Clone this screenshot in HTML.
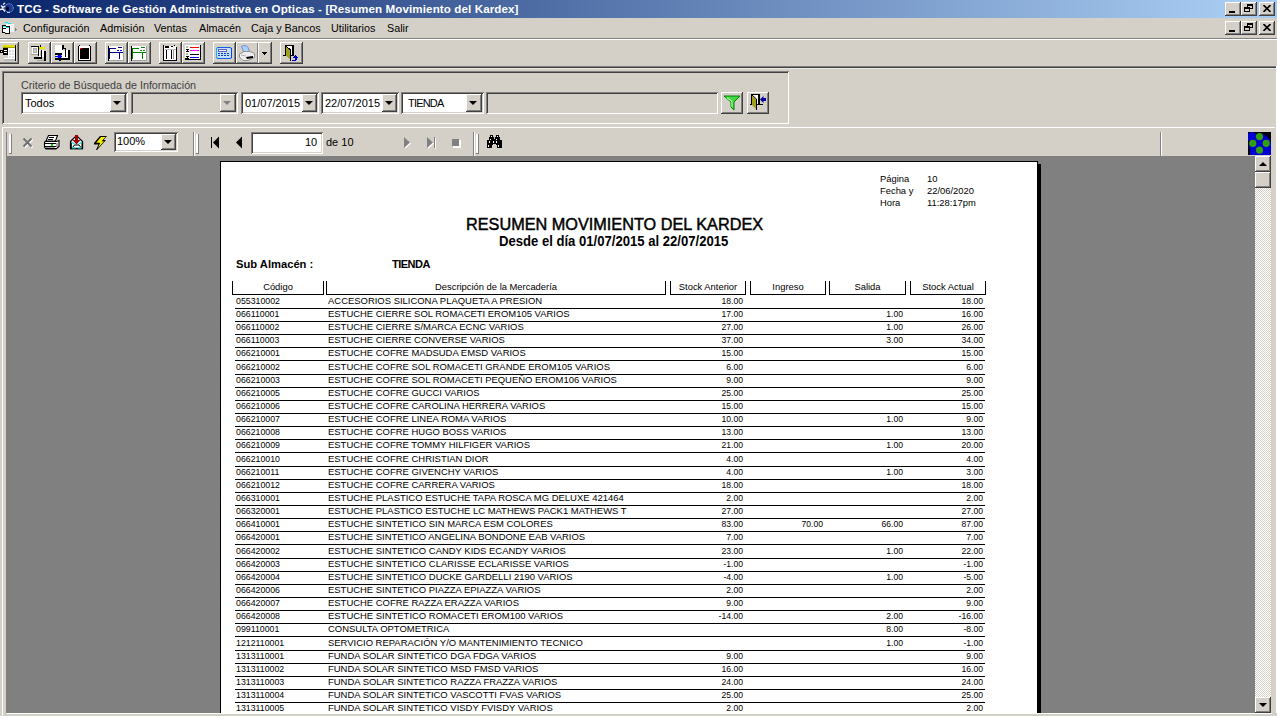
<!DOCTYPE html>
<html><head><meta charset="utf-8">
<style>
*{margin:0;padding:0;box-sizing:border-box}
html,body{width:1277px;height:716px;overflow:hidden;background:#d4d0c8;font-family:"Liberation Sans",sans-serif;color:#000}
.a{position:absolute}
.t{position:absolute;white-space:pre;line-height:1}
.raised{position:absolute;background:#d4d0c8;box-shadow:inset -1px -1px #404040,inset 1px 1px #fff,inset -2px -2px #808080}
.sunk{position:absolute;background:#fff;box-shadow:inset 1px 1px #808080,inset -1px -1px #fff,inset 2px 2px #404040,inset -2px -2px #d4d0c8}
.hl{position:absolute;height:1px}
.vl{position:absolute;width:1px}
.tri{position:absolute;width:0;height:0;border-left:4px solid transparent;border-right:4px solid transparent;border-top:4px solid #000}
/* report */
.rl{position:absolute;left:235px;width:750px;height:1px;background:#000}
.rt{position:absolute;white-space:pre;line-height:1;font-size:10px}
.rt.c{left:236px;transform:scale(0.879,0.9);transform-origin:0 0}
.rt.d{left:328px;transform:scale(0.945,0.9);transform-origin:0 0}
.rt.n{width:80px;text-align:right;transform:scale(0.86,0.9);transform-origin:100% 0}
.hb{position:absolute;top:281px;height:14px;border:1px solid #000;border-top:none}
.ht{position:absolute;top:282px;font-size:9.4px;white-space:pre;line-height:1;text-align:center}
</style></head><body>

<!-- TITLE BAR -->
<div class="a" style="left:0;top:0;width:1277px;height:18px;background:linear-gradient(to right,#0a246a 0px,#a6caf0 1224px)"></div>
<svg class="a" style="left:0;top:0" width="16" height="18" viewBox="0 0 16 18">
 <circle cx="9" cy="8" r="4.3" fill="#1a3a9a" stroke="#7aa0e0" stroke-width="1" stroke-dasharray="1.2 0.6"/>
 <ellipse cx="7.5" cy="8.5" rx="1.6" ry="2.2" fill="#000"/>
 <path d="M0 9.5 L3 9 L5 11.5 M1 5.5 L3 7.5 M3 4.5 L5 3 M2 8 L5 6" stroke="#f0f4ff" stroke-width="1.3" fill="none"/>
 <path d="M7 12.5 H10" stroke="#c0d0f0" stroke-width="1"/>
</svg>
<div class="t" style="left:17px;top:3px;font-size:11.6px;font-weight:bold;color:#fff;letter-spacing:0.1px">TCG - Software de Gestión Administrativa en Opticas - [Resumen Movimiento del Kardex]</div>
<div class="raised" style="left:1225px;top:2px;width:16px;height:14px"><div class="a" style="left:4px;top:9px;width:6px;height:2px;background:#000"></div></div>
<div class="raised" style="left:1241px;top:2px;width:16px;height:14px">
 <div class="a" style="left:6px;top:2px;width:6px;height:5px;border:1px solid #000;border-top-width:2px"></div>
 <div class="a" style="left:3px;top:5px;width:6px;height:5px;border:1px solid #000;border-top-width:2px;background:#d4d0c8"></div>
</div>
<div class="raised" style="left:1259px;top:2px;width:16px;height:14px">
 <svg class="a" style="left:4px;top:3px" width="8" height="7" viewBox="0 0 8 7"><path d="M0.5 0 L7.5 7 M7.5 0 L0.5 7" stroke="#000" stroke-width="1.6"/></svg>
</div>

<!-- MENU BAR -->
<svg class="a" style="left:0;top:18px" width="18" height="20" viewBox="0 18 18 20" shape-rendering="crispEdges">
 <rect x="5" y="22" width="3" height="1" fill="#00e8f0"/><rect x="8" y="23" width="3" height="1" fill="#00e8f0"/><rect x="12" y="24" width="2" height="1" fill="#00e8f0"/>
 <rect x="6" y="24" width="8" height="8" fill="#fff"/><rect x="11" y="25" width="3" height="7" fill="#f0f0f0"/>
 <rect x="2" y="25" width="4" height="1" fill="#000"/><rect x="6" y="26" width="4" height="1" fill="#000"/><rect x="2" y="25" width="1" height="8" fill="#000"/><rect x="9" y="26" width="1" height="7" fill="#000"/><rect x="2" y="32" width="3" height="1" fill="#000"/><rect x="5" y="33" width="5" height="1" fill="#000"/>
 <rect x="3" y="26" width="3" height="1" fill="#00e8f0"/><rect x="6" y="27" width="3" height="1" fill="#00e8f0"/>
 <rect x="3" y="27" width="3" height="5" fill="#fff"/><rect x="6" y="28" width="3" height="5" fill="#fff"/><rect x="3" y="28" width="3" height="1" fill="#000"/>
 <rect x="15" y="28" width="1" height="3" fill="#808080"/><rect x="16" y="29" width="1" height="1" fill="#808080"/>
</svg>
<div class="t" style="left:23px;top:23px;font-size:10.8px">Configuración</div>
<div class="t" style="left:100px;top:23px;font-size:10.8px">Admisión</div>
<div class="t" style="left:154px;top:23px;font-size:10.8px">Ventas</div>
<div class="t" style="left:199px;top:23px;font-size:10.8px">Almacén</div>
<div class="t" style="left:251px;top:23px;font-size:10.8px">Caja y Bancos</div>
<div class="t" style="left:331px;top:23px;font-size:10.8px">Utilitarios</div>
<div class="t" style="left:387px;top:23px;font-size:10.8px">Salir</div>
<div class="raised" style="left:1225px;top:21px;width:16px;height:14px"><div class="a" style="left:4px;top:9px;width:6px;height:2px;background:#000"></div></div>
<div class="raised" style="left:1241px;top:21px;width:16px;height:14px">
 <div class="a" style="left:6px;top:2px;width:6px;height:5px;border:1px solid #000;border-top-width:2px"></div>
 <div class="a" style="left:3px;top:5px;width:6px;height:5px;border:1px solid #000;border-top-width:2px;background:#d4d0c8"></div>
</div>
<div class="raised" style="left:1259px;top:21px;width:16px;height:14px">
 <svg class="a" style="left:4px;top:3px" width="8" height="7" viewBox="0 0 8 7"><path d="M0.5 0 L7.5 7 M7.5 0 L0.5 7" stroke="#000" stroke-width="1.6"/></svg>
</div>
<div class="hl" style="left:0;top:38px;width:1277px;background:#808080"></div>
<div class="hl" style="left:0;top:39px;width:1277px;background:#fff"></div>

<!-- MAIN TOOLBAR -->
<div class="raised" style="left:-4px;top:42px;width:23px;height:22px"></div>
<div class="raised" style="left:28px;top:42px;width:23px;height:22px"></div>
<div class="raised" style="left:51px;top:42px;width:23px;height:22px"></div>
<div class="raised" style="left:74px;top:42px;width:23px;height:22px"></div>
<div class="raised" style="left:105px;top:42px;width:23px;height:22px"></div>
<div class="raised" style="left:128px;top:42px;width:23px;height:22px"></div>
<div class="raised" style="left:159px;top:42px;width:23px;height:22px"></div>
<div class="raised" style="left:182px;top:42px;width:23px;height:22px"></div>
<div class="raised" style="left:213px;top:42px;width:23px;height:22px"></div>
<div class="raised" style="left:236px;top:42px;width:23px;height:22px"></div>
<div class="raised" style="left:280px;top:42px;width:23px;height:22px"></div>
<div class="raised" style="left:258px;top:42px;width:14px;height:22px"></div>
<svg class="a" style="left:0px;top:44px" width="17" height="18" viewBox="0 44 17 18" shape-rendering="crispEdges"><rect x="3" y="45" width="12" height="2" fill="#e0e000"/><rect x="3" y="47" width="12" height="1" fill="#a0a000"/><rect x="15" y="45" width="1" height="16" fill="#000"/><rect x="8" y="48" width="7" height="12" fill="#fff"/><rect x="9" y="50" width="5" height="8" fill="#e0e0e0"/><rect x="10" y="51" width="1" height="1" fill="#c0c0c0"/><rect x="9" y="52" width="5" height="1" fill="#fff"/><rect x="9" y="55" width="5" height="1" fill="#fff"/><rect x="11" y="50" width="1" height="8" fill="#fff"/><rect x="4" y="59" width="11" height="2" fill="#b8b8b8"/><rect x="4" y="58" width="4" height="1" fill="#fff"/><rect x="3" y="48" width="5" height="7" fill="#000"/><rect x="4" y="50" width="3" height="1" fill="#fff"/><rect x="4" y="52" width="3" height="1" fill="#fff"/><rect x="0" y="50" width="3" height="3" fill="#000"/><rect x="1" y="51" width="1" height="1" fill="#fff"/></svg>
<svg class="a" style="left:30px;top:44px" width="17" height="18" viewBox="30 44 17 18" shape-rendering="crispEdges"><rect x="31" y="46" width="8" height="1" fill="#000"/><rect x="32" y="47" width="6" height="7" fill="#fff"/><rect x="33" y="48" width="4" height="5" fill="#a8a8a8"/><rect x="34" y="49" width="2" height="3" fill="#d0d0d0"/><rect x="31" y="54" width="7" height="1" fill="#a0a0a0"/><rect x="38" y="46" width="1" height="10" fill="#000"/><rect x="40" y="45" width="1" height="3" fill="#000"/><rect x="39" y="47" width="6" height="2" fill="#e8e800"/><rect x="39" y="48" width="1" height="1" fill="#c0c000"/><rect x="39" y="50" width="5" height="7" fill="#fff"/><rect x="40" y="51" width="2" height="5" fill="#c0c0c0"/><rect x="41" y="50" width="1" height="8" fill="#000"/><rect x="44" y="51" width="2" height="10" fill="#000"/><rect x="34" y="57" width="8" height="2" fill="#000"/><rect x="37" y="60" width="7" height="1" fill="#a0a0a0"/></svg>
<svg class="a" style="left:54px;top:44px" width="17" height="18" viewBox="54 44 17 18" shape-rendering="crispEdges"><rect x="55" y="45" width="7" height="9" fill="#fff"/><rect x="62" y="45" width="2" height="5" fill="#000"/><rect x="64" y="48" width="2" height="2" fill="#000"/><rect x="63" y="49" width="2" height="8" fill="#c8c8c8"/><rect x="64" y="50" width="1" height="1" fill="#fff"/><rect x="64" y="52" width="1" height="1" fill="#fff"/><rect x="55" y="53" width="7" height="2" fill="#000"/><rect x="62" y="50" width="6" height="8" fill="#fff"/><rect x="68" y="50" width="2" height="10" fill="#000"/><rect x="55" y="58" width="15" height="2" fill="#000"/><rect x="65" y="49" width="1" height="8" fill="#000"/><rect x="55" y="56" width="6" height="1" fill="#0000ff"/><rect x="58" y="55" width="3" height="3" fill="#0000ff"/><rect x="61" y="56" width="1" height="1" fill="#0000ff"/><rect x="59" y="60" width="2" height="1" fill="#000"/><rect x="56" y="55" width="1" height="1" fill="#fff"/></svg>
<svg class="a" style="left:77px;top:44px" width="15" height="18" viewBox="77 44 15 18" shape-rendering="crispEdges"><rect x="78" y="46" width="1" height="15" fill="#000"/><rect x="90" y="46" width="1" height="15" fill="#000"/><rect x="78" y="60" width="13" height="1" fill="#000"/><rect x="79" y="45" width="1" height="1" fill="#000"/><rect x="89" y="45" width="1" height="1" fill="#000"/><rect x="79" y="46" width="11" height="14" fill="#fff"/><rect x="80" y="48" width="9" height="11" fill="#000"/><rect x="80" y="48" width="2" height="1" fill="#ff0000"/></svg>
<svg class="a" style="left:107px;top:45px" width="18" height="17" viewBox="107 45 18 17" shape-rendering="crispEdges"><rect x="109" y="46" width="14" height="14" fill="#fff"/><rect x="123" y="46" width="1" height="15" fill="#a0a0a0"/><rect x="109" y="60" width="15" height="1" fill="#a0a0a0"/><rect x="108" y="46" width="1" height="15" fill="#000"/><rect x="109" y="48" width="1" height="11" fill="#00008c"/><rect x="109" y="48" width="7" height="1" fill="#00008c"/><rect x="118" y="47" width="4" height="1" fill="#00008c"/><rect x="117" y="50" width="2" height="1" fill="#0000ff"/><rect x="120" y="50" width="2" height="1" fill="#0000ff"/><rect x="109" y="52" width="14" height="1" fill="#00008c"/><rect x="119" y="52" width="1" height="7" fill="#00008c"/></svg>
<svg class="a" style="left:130px;top:45px" width="18" height="17" viewBox="130 45 18 17" shape-rendering="crispEdges"><rect x="132" y="46" width="14" height="14" fill="#fff"/><rect x="146" y="46" width="1" height="15" fill="#a0a0a0"/><rect x="132" y="60" width="15" height="1" fill="#a0a0a0"/><rect x="131" y="46" width="1" height="15" fill="#000"/><rect x="132" y="48" width="1" height="11" fill="#008000"/><rect x="132" y="48" width="7" height="1" fill="#008000"/><rect x="141" y="47" width="4" height="1" fill="#008000"/><rect x="140" y="50" width="2" height="1" fill="#00a000"/><rect x="143" y="50" width="2" height="1" fill="#00a000"/><rect x="132" y="52" width="14" height="1" fill="#008000"/><rect x="142" y="52" width="1" height="7" fill="#008000"/></svg>
<svg class="a" style="left:162px;top:44px" width="16" height="18" viewBox="162 44 16 18" shape-rendering="crispEdges"><rect x="163" y="45" width="1" height="16" fill="#000"/><rect x="176" y="47" width="1" height="14" fill="#000"/><rect x="163" y="60" width="14" height="1" fill="#000"/><rect x="174" y="45" width="1" height="1" fill="#000"/><rect x="175" y="46" width="1" height="1" fill="#000"/><rect x="164" y="46" width="12" height="14" fill="#fff"/><rect x="165" y="46" width="4" height="2" fill="#000"/><rect x="171" y="46" width="2" height="1" fill="#000"/><rect x="165" y="49" width="11" height="1" fill="#c0c0c0"/><rect x="166" y="50" width="1" height="9" fill="#000"/><rect x="171" y="50" width="1" height="9" fill="#000"/><rect x="173" y="50" width="1" height="9" fill="#a0a0a0"/></svg>
<svg class="a" style="left:184px;top:44px" width="18" height="17" viewBox="184 44 18 17" shape-rendering="crispEdges"><rect x="185" y="45" width="15" height="14" fill="#fff"/><rect x="200" y="45" width="1" height="15" fill="#000"/><rect x="185" y="59" width="16" height="1" fill="#000"/><rect x="190" y="47" width="9" height="1" fill="#ff0000"/><rect x="190" y="50" width="9" height="1" fill="#ff00ff"/><rect x="190" y="54" width="9" height="1" fill="#000"/><rect x="190" y="57" width="9" height="1" fill="#0000ff"/><rect x="186" y="46" width="2" height="2" fill="#b8b8b8"/><rect x="186" y="53" width="2" height="2" fill="#b8b8b8"/><rect x="186" y="49" width="3" height="1" fill="#000"/><rect x="187" y="50" width="1" height="1" fill="#000"/><rect x="186" y="51" width="3" height="1" fill="#000"/><rect x="186" y="56" width="3" height="1" fill="#000"/><rect x="187" y="57" width="1" height="1" fill="#000"/><rect x="185" y="58" width="4" height="1" fill="#000"/></svg>
<svg class="a" style="left:215px;top:46px" width="18" height="14" viewBox="215 46 18 14"><rect x="216.5" y="47.5" width="15" height="11" rx="1.5" fill="#c8e0ff" stroke="#1060f0"/><rect x="216" y="48" width="1" height="10" fill="#20a8ff"/><rect x="231" y="48" width="1" height="10" fill="#0040ff"/><rect x="218" y="49" width="9" height="3" fill="#6060c0"/><rect x="219" y="50" width="7" height="1" fill="#fff"/><rect x="218" y="53" width="2" height="1" fill="#0040c8"/><rect x="218" y="55" width="2" height="1" fill="#0040c8"/><rect x="221" y="53" width="2" height="1" fill="#0040c8"/><rect x="221" y="55" width="2" height="1" fill="#0040c8"/><rect x="224" y="53" width="2" height="1" fill="#0040c8"/><rect x="224" y="55" width="2" height="1" fill="#0040c8"/><rect x="227" y="53" width="2" height="1" fill="#0040c8"/><rect x="227" y="55" width="2" height="1" fill="#0040c8"/></svg>
<svg class="a" style="left:238px;top:44px" width="18" height="18" viewBox="238 44 18 18"><path d="M241.5 46.5 L244 45.5 L246.5 46 L248 47.5 L249.5 51.5 L244 52.5 Z" fill="#a8d4fa" stroke="#8080e0" stroke-width="1"/><path d="M239.5 54 L244 51.5 L250 51.5 L254.5 53.5 L254.5 57.5 L248 60.5 L243 60.5 L239.5 57 Z" fill="#eeeeee" stroke="#909090" stroke-width="1"/><path d="M246 57 L253 56 L253 58 L247 59z" fill="#000"/><path d="M241 55 L246 56" stroke="#b0b0b0" stroke-width="1"/></svg>
<svg class="a" style="left:262px;top:52px" width="5" height="3" viewBox="262 52 5 3" shape-rendering="crispEdges"><rect x="262" y="52" width="5" height="1" fill="#000"/><rect x="263" y="53" width="3" height="1" fill="#000"/><rect x="264" y="54" width="1" height="1" fill="#000"/></svg>
<svg class="a" style="left:282px;top:44px" width="18" height="18" viewBox="282 44 18 18" shape-rendering="crispEdges"><rect x="285" y="45" width="9" height="1" fill="#000"/><rect x="285" y="45" width="1" height="11" fill="#000"/><rect x="292" y="45" width="2" height="10" fill="#000"/><rect x="286" y="46" width="6" height="9" fill="#fff"/><rect x="283" y="55" width="11" height="1" fill="#000"/><path d="M286 46.5 L290 50 L290 60 L286 56 Z" fill="#a0a020"/><path d="M286 46 L290.5 50 L290.5 61" stroke="#000" stroke-width="1" fill="none"/><rect x="295" y="55" width="1" height="1" fill="#0000c0"/><rect x="294" y="56" width="3" height="1" fill="#0000c0"/><rect x="293" y="57" width="5" height="1" fill="#0000c0"/><rect x="295" y="58" width="2" height="2" fill="#0000c0"/><rect x="292" y="60" width="4" height="1" fill="#0000c0"/></svg>
<div class="hl" style="left:0;top:66px;width:1276px;background:#808080"></div>
<div class="hl" style="left:0;top:67px;width:1276px;background:#404040"></div>
<div class="hl" style="left:0;top:68px;width:1276px;background:#ebe9e3"></div>
<div class="vl" style="left:1276px;top:66px;height:650px;background:#fff"></div>

<!-- SEARCH PANEL -->
<div class="sunk" style="left:2px;top:71px;width:787px;height:53px;background:#d4d0c8"></div>
<div class="t" style="left:21px;top:80px;font-size:10.75px;color:#404040">Criterio de Búsqueda de Información</div>
<div class="sunk" style="left:21px;top:92px;width:107px;height:22px;background:#fff"></div><div class="raised" style="left:110px;top:94px;width:16px;height:18px"><div class="tri" style="left:3px;top:7px;border-top-color:#000"></div></div><div class="t" style="left:25px;top:98px;font-size:11px;">Todos</div>
<div class="sunk" style="left:131px;top:92px;width:107px;height:22px;background:#d4d0c8"></div><div class="raised" style="left:220px;top:94px;width:16px;height:18px"><div class="tri" style="left:3px;top:7px;border-top-color:#808080"></div></div>
<div class="sunk" style="left:241px;top:92px;width:78px;height:22px;background:#fff"></div><div class="raised" style="left:302px;top:94px;width:15px;height:18px"><div class="tri" style="left:3px;top:7px;border-top-color:#000"></div></div><div class="t" style="left:245px;top:98px;font-size:11px;">01/07/2015</div>
<div class="sunk" style="left:321px;top:92px;width:78px;height:22px;background:#fff"></div><div class="raised" style="left:382px;top:94px;width:15px;height:18px"><div class="tri" style="left:3px;top:7px;border-top-color:#000"></div></div><div class="t" style="left:325px;top:98px;font-size:11px;">22/07/2015</div>
<div class="sunk" style="left:401px;top:92px;width:83px;height:22px;background:#fff"></div><div class="raised" style="left:466px;top:94px;width:16px;height:18px"><div class="tri" style="left:3px;top:7px;border-top-color:#000"></div></div><div class="t" style="left:408px;top:98px;font-size:11px;letter-spacing:-0.8px;">TIENDA</div>
<div class="sunk" style="left:486px;top:92px;width:232px;height:22px;background:#d4d0c8"></div>
<div class="raised" style="left:721px;top:92px;width:22px;height:22px"></div>
<div class="raised" style="left:747px;top:92px;width:22px;height:22px"></div>
<svg class="a" style="left:722px;top:94px" width="20" height="18" viewBox="722 94 20 18"><path d="M724 96 H740 L734 102 V110 L731 107 V102 Z" fill="#40d840" stroke="#008000" stroke-width="1"/><path d="M727 97.5 L732 101.5 V107" stroke="#a0ffa0" stroke-width="1.2" fill="none"/></svg>
<svg class="a" style="left:749px;top:93px" width="19" height="19" viewBox="749 93 19 19"><rect x="751" y="94" width="9" height="1" fill="#000"/><rect x="751" y="94" width="1" height="11" fill="#000"/><rect x="758" y="94" width="2" height="10" fill="#000"/><rect x="752" y="95" width="6" height="9" fill="#fff"/><rect x="750" y="104" width="13" height="1" fill="#000"/><path d="M752 95.5 L756 99 L756 109 L752 105 Z" fill="#a0a020"/><path d="M752 95 L756.5 99 L756.5 110" stroke="#000" stroke-width="1" fill="none"/><path d="M760 99.5 L763.5 96 V98 H766 V101 H763.5 V103 Z" fill="#0000a0"/></svg>

<!-- PREVIEW TOOLBAR -->
<div class="a" style="left:2px;top:127px;width:1273px;height:29px;border-top:1px solid #fff;border-left:1px solid #fff"></div>
<div class="vl" style="left:6px;top:132px;height:24px;background:#808080"></div>
<div class="vl" style="left:9px;top:134px;height:20px;background:#fff"></div><div class="vl" style="left:10px;top:134px;height:20px;background:#fff"></div><div class="vl" style="left:11px;top:134px;height:20px;background:#808080"></div><div class="hl" style="left:9px;top:153px;width:3px;background:#808080"></div>
<svg class="a" style="left:21px;top:136px" width="14" height="14" viewBox="21 136 14 14"><path d="M24.5 139.5 L32.5 147.5 M32.5 139.5 L24.5 147.5" stroke="#fff" stroke-width="2"/><path d="M23.5 138.5 L31.5 146.5 M31.5 138.5 L23.5 146.5" stroke="#707070" stroke-width="2"/></svg>
<svg class="a" style="left:43px;top:134px" width="18" height="16" viewBox="43 134 18 16"><path d="M48.5 135.5 H57.5 L55.5 141 H46 Z" fill="#fff" stroke="#000" stroke-width="1.1"/><rect x="49" y="137" width="5" height="1" fill="#000"/><rect x="48" y="139" width="5" height="1" fill="#000"/><path d="M45 141.5 H56.5 L59 140.5 V146.5 L56 149 H46 L44.5 147 V142.5 Z" fill="#fff" stroke="#000" stroke-width="1.1"/><rect x="45" y="143" width="12" height="1" fill="#000"/><rect x="45" y="146" width="11" height="1" fill="#000"/><rect x="46" y="147" width="9" height="1" fill="#a0a0a0"/><rect x="45" y="148" width="11" height="1" fill="#000"/><rect x="51" y="144" width="2" height="2" fill="#00e000"/><rect x="56" y="143" width="2" height="4" fill="#a0a0a0"/></svg>
<svg class="a" style="left:69px;top:134px" width="16" height="16" viewBox="69 134 16 16"><path d="M70.5 141.5 L76.5 135.5 L82.5 141.5 V148.5 H70.5 Z" fill="#fff" stroke="#000" stroke-width="1.2"/><path d="M71 141.8 V148.5 M82.3 141.8 V148.5" stroke="#000" stroke-width="1.6"/><path d="M70.2 148.6 H83" stroke="#000" stroke-width="1.6"/><path d="M71.5 142 L75 144.5 M81.8 142 L78.3 144.5" stroke="#10e8f0" stroke-width="1.2"/><path d="M72.5 147.5 L74.5 145 H79 L81 147.5" stroke="#000" stroke-width="1" fill="none"/><path d="M72 147.8 H75.5 M77.8 147.8 H81.5" stroke="#10e8f0" stroke-width="1.2"/><path d="M75 135 H78 V140 H80.5 L76.5 144.5 L72.5 140 H75 Z" fill="#a00000"/></svg>
<svg class="a" style="left:93px;top:135px" width="15" height="16" viewBox="93 135 15 16"><path d="M100 136 H107 L103.5 140 H106 L97 150 H96 L98.5 144.5 H94 V143 Z" fill="#000"/><path d="M101 137 H105.5 L101.5 141.2 H104 L98 148 L100.2 142.8 H96.2 Z" fill="#f8f000"/></svg>
<svg class="a" style="left:209px;top:135px" width="12" height="15" viewBox="209 135 12 15"><rect x="211" y="137" width="1" height="11" fill="#000"/><path d="M213 142.5 L219 136.5 V148.5 Z" fill="#000"/></svg>
<svg class="a" style="left:234px;top:135px" width="10" height="15" viewBox="234 135 10 15"><path d="M236 142.5 L242 136.5 V148.5 Z" fill="#000"/></svg>
<svg class="a" style="left:402px;top:135px" width="11" height="16" viewBox="402 135 11 16"><path d="M405 138 V149 L411 143.5 Z" fill="#fff"/><path d="M404 137 V148 L410 142.5 Z" fill="#808080"/></svg>
<svg class="a" style="left:425px;top:135px" width="12" height="16" viewBox="425 135 12 16"><path d="M428 138 V149 L434 143.5 Z" fill="#fff"/><path d="M427 137 V148 L433 142.5 Z" fill="#808080"/><rect x="434" y="137" width="1" height="11" fill="#808080"/><rect x="435" y="138" width="1" height="11" fill="#fff"/></svg>
<svg class="a" style="left:451px;top:138px" width="11" height="11" viewBox="451 138 11 11" shape-rendering="crispEdges"><rect x="453" y="140" width="8" height="8" fill="#fff"/><rect x="452" y="139" width="7" height="7" fill="#808080"/></svg>
<svg class="a" style="left:486px;top:134px" width="17" height="15" viewBox="486 134 17 15" shape-rendering="crispEdges"><rect x="490" y="135" width="3" height="2" fill="#000"/><rect x="496" y="135" width="3" height="2" fill="#000"/><rect x="489" y="137" width="5" height="3" fill="#000"/><rect x="495" y="137" width="5" height="3" fill="#000"/><rect x="487" y="140" width="8" height="8" fill="#000"/><rect x="495" y="140" width="7" height="8" fill="#000"/><rect x="494" y="139" width="1" height="6" fill="#000"/><rect x="492" y="145" width="5" height="3" fill="#d4d0c8"/><rect x="493" y="144" width="3" height="1" fill="#d4d0c8"/><rect x="491" y="136" width="1" height="1" fill="#fff"/><rect x="497" y="136" width="1" height="1" fill="#fff"/><rect x="490" y="139" width="1" height="1" fill="#fff"/><rect x="496" y="139" width="1" height="1" fill="#fff"/><rect x="489" y="141" width="1" height="2" fill="#fff"/><rect x="493" y="141" width="1" height="2" fill="#fff"/><rect x="496" y="141" width="1" height="2" fill="#fff"/><rect x="488" y="145" width="1" height="2" fill="#fff"/><rect x="498" y="145" width="1" height="2" fill="#fff"/></svg>
<div class="sunk" style="left:114px;top:132px;width:64px;height:20px;background:#fff"><div class="raised" style="left:47px;top:2px;width:15px;height:16px"><div class="tri" style="left:3px;top:6px"></div></div></div>
<div class="t" style="left:117px;top:136px;font-size:11px">100%</div>
<div class="vl" style="left:193px;top:132px;height:24px;background:#808080"></div><div class="vl" style="left:194px;top:132px;height:24px;background:#fff"></div>
<div class="vl" style="left:196px;top:134px;height:20px;background:#fff"></div><div class="vl" style="left:197px;top:134px;height:20px;background:#fff"></div><div class="vl" style="left:198px;top:134px;height:20px;background:#808080"></div><div class="hl" style="left:196px;top:153px;width:3px;background:#808080"></div>
<div class="sunk" style="left:251px;top:132px;width:72px;height:22px;background:#fff"></div>
<div class="t" style="left:305px;top:137px;font-size:11px">10</div>
<div class="t" style="left:326px;top:137px;font-size:11px">de 10</div>
<div class="vl" style="left:473px;top:132px;height:24px;background:#808080"></div><div class="vl" style="left:474px;top:132px;height:24px;background:#fff"></div>
<div class="vl" style="left:476px;top:134px;height:20px;background:#fff"></div><div class="vl" style="left:477px;top:134px;height:20px;background:#fff"></div><div class="vl" style="left:478px;top:134px;height:20px;background:#808080"></div><div class="hl" style="left:476px;top:153px;width:3px;background:#808080"></div>
<div class="vl" style="left:1160px;top:132px;height:24px;background:#808080"></div><div class="vl" style="left:1161px;top:132px;height:24px;background:#fff"></div>
<svg class="a" style="left:1248px;top:132px" width="23" height="23" viewBox="1248 132 23 23"><rect x="1248" y="132" width="23" height="23" fill="#000"/><clipPath id="ic"><rect x="1248" y="132" width="23" height="23"/></clipPath><g clip-path="url(#ic)"><circle cx="1260" cy="145" r="11" fill="#0000d0"/><circle cx="1252" cy="137" r="5" fill="#0000d0"/><rect x="1250" y="146" width="21" height="9" fill="#0000d0"/></g><circle cx="1259.5" cy="136.6" r="3.6" fill="#30a010"/><circle cx="1252.8" cy="143.3" r="3.6" fill="#30a010"/><circle cx="1266.2" cy="143.3" r="3.6" fill="#30a010"/><circle cx="1259.5" cy="150.1" r="3.6" fill="#30a010"/></svg>

<!-- VIEW AREA -->
<div class="a" style="left:6px;top:156px;width:1249px;height:557px;background:#808080"></div>
<div class="vl" style="left:2px;top:127px;height:589px;background:#fff"></div>
<!-- page -->
<div class="a" style="left:1038px;top:164px;width:3px;height:549px;background:#000"></div>
<div class="a" style="left:220px;top:161px;width:818px;height:560px;background:#fff;border:1px solid #000"></div>
<div class="t" style="left:880px;top:174px;font-size:9.4px">Página</div>
<div class="t" style="left:880px;top:186px;font-size:9.4px">Fecha y</div>
<div class="t" style="left:880px;top:198px;font-size:9.4px">Hora</div>
<div class="t" style="left:927px;top:174px;font-size:9.4px">10</div>
<div class="t" style="left:927px;top:186px;font-size:9.4px">22/06/2020</div>
<div class="t" style="left:927px;top:198px;font-size:9.4px">11:28:17pm</div>
<div class="t" style="left:466px;top:216px;font-size:16.25px;-webkit-text-stroke:0.45px #000">RESUMEN MOVIMIENTO DEL KARDEX</div>
<div class="t" style="left:499px;top:234px;font-size:14px;font-weight:bold;transform:scaleX(0.935);transform-origin:0 0">Desde el día 01/07/2015 al 22/07/2015</div>
<div class="t" style="left:236px;top:259px;font-size:11.2px;font-weight:bold">Sub Almacén :</div>
<div class="t" style="left:392px;top:259px;font-size:11px;font-weight:bold;letter-spacing:-0.5px">TIENDA</div>
<div class="hb" style="left:232px;width:92px"></div>
<div class="ht" style="left:232px;width:92px">Código</div>
<div class="hb" style="left:326px;width:340px"></div>
<div class="ht" style="left:326px;width:340px">Descripción de la Mercadería</div>
<div class="hb" style="left:670px;width:76px"></div>
<div class="ht" style="left:670px;width:76px">Stock Anterior</div>
<div class="hb" style="left:750px;width:76px"></div>
<div class="ht" style="left:750px;width:76px">Ingreso</div>
<div class="hb" style="left:829px;width:77px"></div>
<div class="ht" style="left:829px;width:77px">Salida</div>
<div class="hb" style="left:910px;width:76px"></div>
<div class="ht" style="left:910px;width:76px">Stock Actual</div>
<div class="rl" style="top:308px"></div>
<div class="rt c" style="top:296.5px">055310002</div>
<div class="rt d" style="top:296.5px">ACCESORIOS SILICONA PLAQUETA A PRESION</div>
<div class="rt n" style="top:296.5px;left:663px">18.00</div>
<div class="rt n" style="top:296.5px;left:903px">18.00</div>
<div class="rl" style="top:321px"></div>
<div class="rt c" style="top:309.5px">066110001</div>
<div class="rt d" style="top:309.5px">ESTUCHE CIERRE SOL ROMACETI EROM105 VARIOS</div>
<div class="rt n" style="top:309.5px;left:663px">17.00</div>
<div class="rt n" style="top:309.5px;left:823px">1.00</div>
<div class="rt n" style="top:309.5px;left:903px">16.00</div>
<div class="rl" style="top:334px"></div>
<div class="rt c" style="top:322.5px">066110002</div>
<div class="rt d" style="top:322.5px">ESTUCHE CIERRE S/MARCA ECNC VARIOS</div>
<div class="rt n" style="top:322.5px;left:663px">27.00</div>
<div class="rt n" style="top:322.5px;left:823px">1.00</div>
<div class="rt n" style="top:322.5px;left:903px">26.00</div>
<div class="rl" style="top:347px"></div>
<div class="rt c" style="top:335.5px">066110003</div>
<div class="rt d" style="top:335.5px">ESTUCHE CIERRE CONVERSE VARIOS</div>
<div class="rt n" style="top:335.5px;left:663px">37.00</div>
<div class="rt n" style="top:335.5px;left:823px">3.00</div>
<div class="rt n" style="top:335.5px;left:903px">34.00</div>
<div class="rl" style="top:360px"></div>
<div class="rt c" style="top:348.5px">066210001</div>
<div class="rt d" style="top:348.5px">ESTUCHE COFRE MADSUDA EMSD VARIOS</div>
<div class="rt n" style="top:348.5px;left:663px">15.00</div>
<div class="rt n" style="top:348.5px;left:903px">15.00</div>
<div class="rl" style="top:374px"></div>
<div class="rt c" style="top:362.5px">066210002</div>
<div class="rt d" style="top:362.5px">ESTUCHE COFRE SOL ROMACETI GRANDE EROM105 VARIOS</div>
<div class="rt n" style="top:362.5px;left:663px">6.00</div>
<div class="rt n" style="top:362.5px;left:903px">6.00</div>
<div class="rl" style="top:387px"></div>
<div class="rt c" style="top:375.5px">066210003</div>
<div class="rt d" style="top:375.5px">ESTUCHE COFRE SOL ROMACETI PEQUEÑO EROM106 VARIOS</div>
<div class="rt n" style="top:375.5px;left:663px">9.00</div>
<div class="rt n" style="top:375.5px;left:903px">9.00</div>
<div class="rl" style="top:400px"></div>
<div class="rt c" style="top:388.5px">066210005</div>
<div class="rt d" style="top:388.5px">ESTUCHE COFRE GUCCI VARIOS</div>
<div class="rt n" style="top:388.5px;left:663px">25.00</div>
<div class="rt n" style="top:388.5px;left:903px">25.00</div>
<div class="rl" style="top:413px"></div>
<div class="rt c" style="top:401.5px">066210006</div>
<div class="rt d" style="top:401.5px">ESTUCHE COFRE CAROLINA HERRERA VARIOS</div>
<div class="rt n" style="top:401.5px;left:663px">15.00</div>
<div class="rt n" style="top:401.5px;left:903px">15.00</div>
<div class="rl" style="top:426px"></div>
<div class="rt c" style="top:414.5px">066210007</div>
<div class="rt d" style="top:414.5px">ESTUCHE COFRE LINEA ROMA VARIOS</div>
<div class="rt n" style="top:414.5px;left:663px">10.00</div>
<div class="rt n" style="top:414.5px;left:823px">1.00</div>
<div class="rt n" style="top:414.5px;left:903px">9.00</div>
<div class="rl" style="top:439px"></div>
<div class="rt c" style="top:427.5px">066210008</div>
<div class="rt d" style="top:427.5px">ESTUCHE COFRE HUGO BOSS VARIOS</div>
<div class="rt n" style="top:427.5px;left:663px">13.00</div>
<div class="rt n" style="top:427.5px;left:903px">13.00</div>
<div class="rl" style="top:452px"></div>
<div class="rt c" style="top:440.5px">066210009</div>
<div class="rt d" style="top:440.5px">ESTUCHE COFRE TOMMY HILFIGER VARIOS</div>
<div class="rt n" style="top:440.5px;left:663px">21.00</div>
<div class="rt n" style="top:440.5px;left:823px">1.00</div>
<div class="rt n" style="top:440.5px;left:903px">20.00</div>
<div class="rl" style="top:466px"></div>
<div class="rt c" style="top:454.5px">066210010</div>
<div class="rt d" style="top:454.5px">ESTUCHE COFRE CHRISTIAN DIOR</div>
<div class="rt n" style="top:454.5px;left:663px">4.00</div>
<div class="rt n" style="top:454.5px;left:903px">4.00</div>
<div class="rl" style="top:479px"></div>
<div class="rt c" style="top:467.5px">066210011</div>
<div class="rt d" style="top:467.5px">ESTUCHE COFRE GIVENCHY VARIOS</div>
<div class="rt n" style="top:467.5px;left:663px">4.00</div>
<div class="rt n" style="top:467.5px;left:823px">1.00</div>
<div class="rt n" style="top:467.5px;left:903px">3.00</div>
<div class="rl" style="top:492px"></div>
<div class="rt c" style="top:480.5px">066210012</div>
<div class="rt d" style="top:480.5px">ESTUCHE COFRE CARRERA VARIOS</div>
<div class="rt n" style="top:480.5px;left:663px">18.00</div>
<div class="rt n" style="top:480.5px;left:903px">18.00</div>
<div class="rl" style="top:505px"></div>
<div class="rt c" style="top:493.5px">066310001</div>
<div class="rt d" style="top:493.5px">ESTUCHE PLASTICO ESTUCHE TAPA ROSCA MG DELUXE 421464</div>
<div class="rt n" style="top:493.5px;left:663px">2.00</div>
<div class="rt n" style="top:493.5px;left:903px">2.00</div>
<div class="rl" style="top:518px"></div>
<div class="rt c" style="top:506.5px">066320001</div>
<div class="rt d" style="top:506.5px">ESTUCHE PLASTICO ESTUCHE LC MATHEWS PACK1 MATHEWS T</div>
<div class="rt n" style="top:506.5px;left:663px">27.00</div>
<div class="rt n" style="top:506.5px;left:903px">27.00</div>
<div class="rl" style="top:531px"></div>
<div class="rt c" style="top:519.5px">066410001</div>
<div class="rt d" style="top:519.5px">ESTUCHE SINTETICO SIN MARCA ESM COLORES</div>
<div class="rt n" style="top:519.5px;left:663px">83.00</div>
<div class="rt n" style="top:519.5px;left:743px">70.00</div>
<div class="rt n" style="top:519.5px;left:823px">66.00</div>
<div class="rt n" style="top:519.5px;left:903px">87.00</div>
<div class="rl" style="top:544px"></div>
<div class="rt c" style="top:532.5px">066420001</div>
<div class="rt d" style="top:532.5px">ESTUCHE SINTETICO ANGELINA BONDONE EAB VARIOS</div>
<div class="rt n" style="top:532.5px;left:663px">7.00</div>
<div class="rt n" style="top:532.5px;left:903px">7.00</div>
<div class="rl" style="top:558px"></div>
<div class="rt c" style="top:546.5px">066420002</div>
<div class="rt d" style="top:546.5px">ESTUCHE SINTETICO CANDY KIDS ECANDY VARIOS</div>
<div class="rt n" style="top:546.5px;left:663px">23.00</div>
<div class="rt n" style="top:546.5px;left:823px">1.00</div>
<div class="rt n" style="top:546.5px;left:903px">22.00</div>
<div class="rl" style="top:571px"></div>
<div class="rt c" style="top:559.5px">066420003</div>
<div class="rt d" style="top:559.5px">ESTUCHE SINTETICO CLARISSE ECLARISSE VARIOS</div>
<div class="rt n" style="top:559.5px;left:663px">-1.00</div>
<div class="rt n" style="top:559.5px;left:903px">-1.00</div>
<div class="rl" style="top:584px"></div>
<div class="rt c" style="top:572.5px">066420004</div>
<div class="rt d" style="top:572.5px">ESTUCHE SINTETICO DUCKE GARDELLI 2190 VARIOS</div>
<div class="rt n" style="top:572.5px;left:663px">-4.00</div>
<div class="rt n" style="top:572.5px;left:823px">1.00</div>
<div class="rt n" style="top:572.5px;left:903px">-5.00</div>
<div class="rl" style="top:597px"></div>
<div class="rt c" style="top:585.5px">066420006</div>
<div class="rt d" style="top:585.5px">ESTUCHE SINTETICO PIAZZA EPIAZZA VARIOS</div>
<div class="rt n" style="top:585.5px;left:663px">2.00</div>
<div class="rt n" style="top:585.5px;left:903px">2.00</div>
<div class="rl" style="top:610px"></div>
<div class="rt c" style="top:598.5px">066420007</div>
<div class="rt d" style="top:598.5px">ESTUCHE COFRE RAZZA ERAZZA VARIOS</div>
<div class="rt n" style="top:598.5px;left:663px">9.00</div>
<div class="rt n" style="top:598.5px;left:903px">9.00</div>
<div class="rl" style="top:623px"></div>
<div class="rt c" style="top:611.5px">066420008</div>
<div class="rt d" style="top:611.5px">ESTUCHE SINTETICO ROMACETI EROM100 VARIOS</div>
<div class="rt n" style="top:611.5px;left:663px">-14.00</div>
<div class="rt n" style="top:611.5px;left:823px">2.00</div>
<div class="rt n" style="top:611.5px;left:903px">-16.00</div>
<div class="rl" style="top:636px"></div>
<div class="rt c" style="top:624.5px">099110001</div>
<div class="rt d" style="top:624.5px">CONSULTA OPTOMETRICA</div>
<div class="rt n" style="top:624.5px;left:823px">8.00</div>
<div class="rt n" style="top:624.5px;left:903px">-8.00</div>
<div class="rl" style="top:650px"></div>
<div class="rt c" style="top:638.5px">1212110001</div>
<div class="rt d" style="top:638.5px">SERVICIO REPARACIÓN Y/O MANTENIMIENTO TECNICO</div>
<div class="rt n" style="top:638.5px;left:823px">1.00</div>
<div class="rt n" style="top:638.5px;left:903px">-1.00</div>
<div class="rl" style="top:663px"></div>
<div class="rt c" style="top:651.5px">1313110001</div>
<div class="rt d" style="top:651.5px">FUNDA SOLAR SINTETICO DGA FDGA VARIOS</div>
<div class="rt n" style="top:651.5px;left:663px">9.00</div>
<div class="rt n" style="top:651.5px;left:903px">9.00</div>
<div class="rl" style="top:676px"></div>
<div class="rt c" style="top:664.5px">1313110002</div>
<div class="rt d" style="top:664.5px">FUNDA SOLAR SINTETICO MSD FMSD VARIOS</div>
<div class="rt n" style="top:664.5px;left:663px">16.00</div>
<div class="rt n" style="top:664.5px;left:903px">16.00</div>
<div class="rl" style="top:689px"></div>
<div class="rt c" style="top:677.5px">1313110003</div>
<div class="rt d" style="top:677.5px">FUNDA SOLAR SINTETICO RAZZA FRAZZA VARIOS</div>
<div class="rt n" style="top:677.5px;left:663px">24.00</div>
<div class="rt n" style="top:677.5px;left:903px">24.00</div>
<div class="rl" style="top:702px"></div>
<div class="rt c" style="top:690.5px">1313110004</div>
<div class="rt d" style="top:690.5px">FUNDA SOLAR SINTETICO VASCOTTI FVAS VARIOS</div>
<div class="rt n" style="top:690.5px;left:663px">25.00</div>
<div class="rt n" style="top:690.5px;left:903px">25.00</div>
<div class="rl" style="top:715px"></div>
<div class="rt c" style="top:703.5px">1313110005</div>
<div class="rt d" style="top:703.5px">FUNDA SOLAR SINTETICO VISDY FVISDY VARIOS</div>
<div class="rt n" style="top:703.5px;left:663px">2.00</div>
<div class="rt n" style="top:703.5px;left:903px">2.00</div>

<!-- SCROLLBAR -->
<div class="a" style="left:1255px;top:156px;width:16px;height:557px;background-color:#fff;background-image:repeating-conic-gradient(#d4d0c8 0 25%,#fff 0 50%);background-size:2px 2px"></div>
<div class="raised" style="left:1255px;top:156px;width:16px;height:16px"><div class="tri" style="left:4px;top:6px;border-top:none;border-bottom:4px solid #000"></div></div>
<div class="raised" style="left:1255px;top:172px;width:16px;height:16px"></div>
<div class="raised" style="left:1255px;top:697px;width:16px;height:16px"><div class="tri" style="left:4px;top:6px"></div></div>

<div class="a" style="left:0;top:713px;width:1277px;height:3px;background:#d4d0c8"></div>
<div class="hl" style="left:7px;top:713px;width:1265px;background:#fff"></div>
<div class="vl" style="left:2px;top:700px;height:16px;background:#fff"></div>
</body></html>
